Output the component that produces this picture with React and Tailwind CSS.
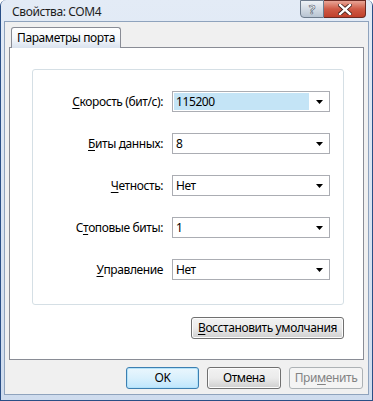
import React from "react";

const font = { fontFamily: '"Noto Sans", "Open Sans", Arial, sans-serif', letterSpacing: "-0.4px" };

function U({ children }) {
  return <span className="underline underline-offset-[2px]">{children}</span>;
}

function Combo({ value, selected }) {
  return (
    <div className="h-[21px] w-[158px] border border-[#abadb3] bg-white flex items-center relative">
      <div className={"ml-[1px] h-[17px] flex items-center pl-[2px] " + (selected ? "w-[135px] bg-[#c4e4f6]" : "")}>
        <span className="text-[12px] leading-none text-black">{value}</span>
      </div>
      <svg className="absolute right-[6px] top-[8px]" width="7" height="4" viewBox="0 0 7 4">
        <path d="M0 0 H7 L3.5 4 Z" fill="#000" />
      </svg>
    </div>
  );
}

function Label({ children }) {
  return (
    <div className="h-[21px] flex items-center justify-end text-[12px] text-black leading-none whitespace-nowrap">{children}</div>
  );
}

function Btn({ children, w, kind }) {
  const base = "h-[22px] rounded-[3px] flex items-center justify-center text-[12px] leading-none whitespace-nowrap ";
  if (kind === "default")
    return (
      <div className={base + "border border-[#3c7fb1] bg-gradient-to-b from-[#eaf6fd] via-[#d9f0fc] to-[#bee6fd] text-black shadow-[inset_0_0_0_1px_#b3e2f9]"} style={{ width: w }}>
        {children}
      </div>
    );
  if (kind === "disabled")
    return (
      <div className={base + "border border-[#adb2b5] bg-[#f4f4f4] text-[#838383]"} style={{ width: w }}>
        {children}
      </div>
    );
  return (
    <div className={base + "border border-[#707070] bg-gradient-to-b from-[#f2f2f2] via-[#ebebeb] to-[#cfcfcf] text-black shadow-[inset_0_0_0_1px_#fcfcfc]"} style={{ width: w }}>
      {children}
    </div>
  );
}

export default function App() {
  return (
    <div className="w-[373px] h-[401px] bg-[#2a4f86] px-[1px] pb-[1px] rounded-t-[6px]" style={font}>
      <div className="w-full h-full bg-gradient-to-b from-[#e3ebf6] to-[#cfdcee] flex flex-col px-[3px] pb-[5px] rounded-t-[5px]">
        {/* Title bar */}
        <div className="h-[21px] flex items-start justify-between shrink-0">
          <div className="pl-[8px] pt-[6px] text-[12px] leading-none text-[#1e1e1e] whitespace-nowrap">Свойства: COM4</div>
          <div className="flex mr-[3px]">
            <div className="w-[24px] h-[18px] rounded-bl-[4px] border border-[#6d7b8c] bg-gradient-to-b from-[#eef2f6] via-[#d3dbe4] to-[#b8c4d2] flex items-center justify-center">
              <span className="text-[13px] font-bold leading-none text-white" style={{ WebkitTextStroke: "0.6px #4a5566" }}>?</span>
            </div>
            <div className="w-[42px] h-[18px] rounded-br-[4px] border border-l-0 border-[#6b2a22] bg-gradient-to-b from-[#e8a596] via-[#cf5a45] to-[#c0402b] flex items-center justify-center">
              <svg width="14" height="11" viewBox="0 0 14 11">
                <path d="M2 1 L12 10 M12 1 L2 10" stroke="#3a1a14" strokeWidth="4" strokeLinecap="square" />
                <path d="M2 1 L12 10 M12 1 L2 10" stroke="#ffffff" strokeWidth="2.4" strokeLinecap="square" />
              </svg>
            </div>
          </div>
        </div>
        {/* Content */}
        <div className="flex-1 bg-[#f0f0f0] border border-[#8fa3bd] flex flex-col px-[4px] pt-[5px]">
          {/* Tab strip */}
          <div className="flex pl-[2px] h-[21px] relative z-10">
            <div className="w-[110px] h-[21px] border border-b-0 border-[#898c95] rounded-t-[3px] bg-gradient-to-b from-[#ffffff] via-[#f5f8fc] to-[#d9e2ee] flex items-center pl-[5px] text-[12px] leading-none text-black whitespace-nowrap">
              Параметры порта
            </div>
          </div>
          {/* Panel */}
          <div className="-mt-[1px] w-[355px] h-[313px] border border-[#898c95] bg-white flex flex-col items-end pr-[19px] pt-[21px]">
            <div className="w-[312px] h-[236px] border border-[#d5dfe5] rounded-[3px] pt-[21px] pl-[1px]">
              <div className="grid grid-cols-[129px_158px] gap-x-[9px] gap-y-[21px]">
                <Label><U>С</U>корость (бит/с):</Label>
                <Combo value="115200" selected />
                <Label><U>Б</U>иты данных:</Label>
                <Combo value="8" />
                <Label><U>Ч</U>етность:</Label>
                <Combo value="Нет" />
                <Label>С<U>т</U>оповые биты:</Label>
                <Combo value="1" />
                <Label><U>У</U>правление</Label>
                <Combo value="Нет" />
              </div>
            </div>
            <div className="mt-[12px]">
              <Btn w={153}><U>В</U>осстановить умолчания</Btn>
            </div>
          </div>
          {/* Bottom buttons */}
          <div className="flex justify-end gap-[8px] pr-[1px] mt-[7px]">
            <Btn w={73} kind="default">OK</Btn>
            <Btn w={74}>Отмена</Btn>
            <Btn w={74} kind="disabled">При<U>м</U>енить</Btn>
          </div>
        </div>
      </div>
    </div>
  );
}
